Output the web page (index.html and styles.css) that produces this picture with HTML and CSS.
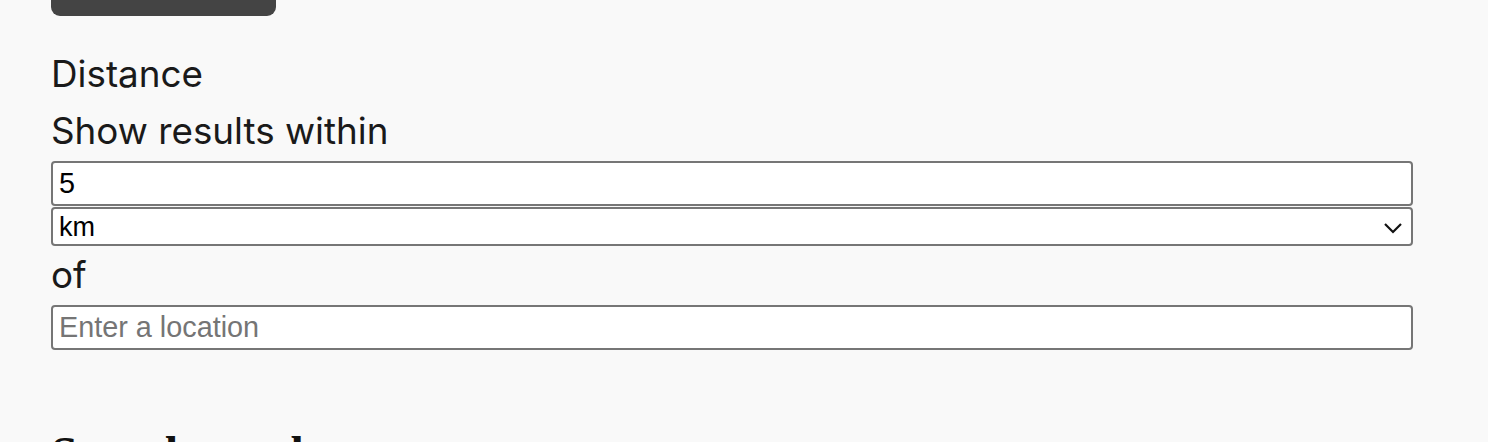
FILE: index.html
```html
<!DOCTYPE html>
<html lang="en">
<head>
<meta charset="utf-8">
<title>Distance filter</title>
<link rel="stylesheet" href="styles.css">
</head>
<body>
<main class="page">
  <div class="apply-btn" aria-hidden="true"></div>
  <form class="filter">
    <div class="legend">Distance</div>
    <label class="label" for="dist">Show results within</label>
    <input class="field" id="dist" type="text" value="5">
    <div class="select-wrap">
      <select class="field select" aria-label="Unit">
        <option>km</option>
        <option>mi</option>
      </select>
      <svg class="chev" width="20" height="12" viewBox="0 0 20 12" aria-hidden="true"><path d="M2 2 L10 10 L18 2" fill="none" stroke="#111" stroke-width="2.2"/></svg>
    </div>
    <label class="label" for="loc">of</label>
    <input class="field" id="loc" type="text" placeholder="Enter a location">
  </form>
  <h2 class="results-title">Search results</h2>
</main>
</body>
</html>
```
FILE: styles.css
```css
html, body {
  margin: 0;
  padding: 0;
  background: #f9f9f9;
}
body {
  font-family: Inter, "Noto Sans", sans-serif;
  color: #1a1a1a;
  overflow: hidden;
  height: 442px;
}
.page {
  padding-left: 51px;
  width: 1362px;
}
.apply-btn {
  width: 225px;
  height: 16px;
  background: #444444;
  border-radius: 0 0 9px 9px;
}
.filter {
  display: flex;
  flex-direction: column;
  margin-top: 29px;
}
.legend, .label {
  font-size: 36.8px;
  line-height: 57px;
  display: block;
}
.label + .field {
  margin-top: 2px;
}
.field {
  box-sizing: border-box;
  width: 1362px;
  margin: 0;
  border: 2px solid #767676;
  border-radius: 4px;
  background: #fff;
  font-family: "Liberation Sans", Arial, sans-serif;
  font-size: 28.8px;
  color: #000;
  padding: 0 6px;
  height: 45px;
  outline: none;
}
.field::placeholder {
  color: #757575;
}
.select-wrap {
  position: relative;
  margin-top: 1px;
}
.select {
  -webkit-appearance: none;
  appearance: none;
  height: 39px;
  font-size: 27px;
  display: block;
}
.chev {
  position: absolute;
  right: 10px;
  top: 15px;
  pointer-events: none;
}
.results-title {
  font-family: "Liberation Serif", "Times New Roman", serif;
  font-weight: bold;
  font-size: 48px;
  margin: 76px 0 0;
  color: #111;
}
```
